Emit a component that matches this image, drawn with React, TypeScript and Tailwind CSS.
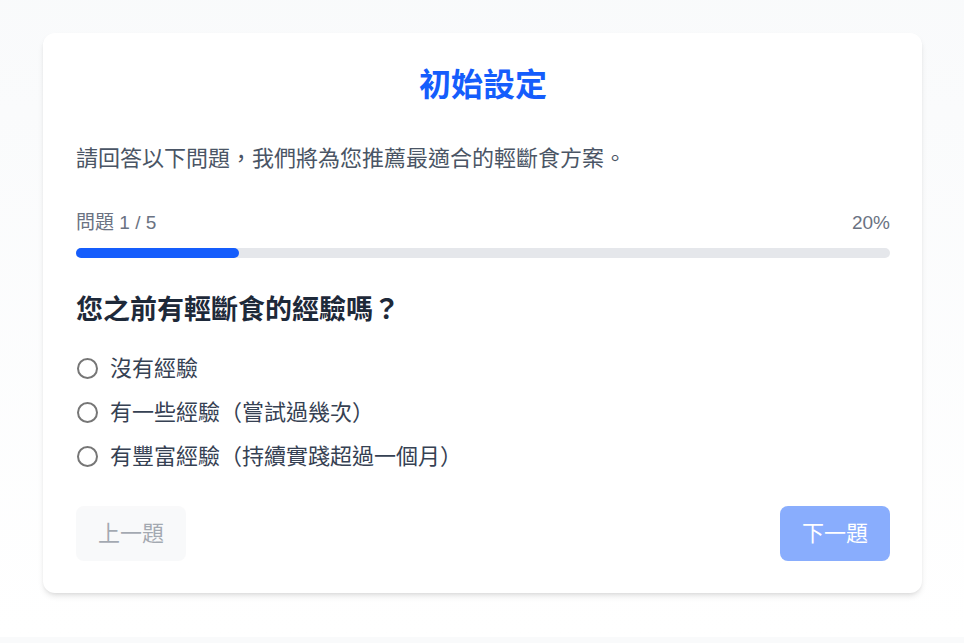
import { useState } from "react"

const OPTIONS = [
  "沒有經驗",
  "有一些經驗（嘗試過幾次）",
  "有豐富經驗（持續實踐超過一個月）",
]

const FONT = { fontFamily: '"Liberation Sans", "Noto Sans CJK TC", sans-serif' }

export default function App() {
  const [answer, setAnswer] = useState<number | null>(null)
  const step = 1
  const total = 5
  const pct = Math.round((step / total) * 100)

  return (
    <div className="min-h-screen bg-gray-50" style={FONT}>
      <div className="bg-gradient-to-b from-gray-50 to-white pl-[43px] pr-[42px] pt-[33px] pb-[44px]">
        <div className="rounded-xl bg-white py-8 pl-[33px] pr-8 shadow-md">
          <h1 className="text-center text-[32px] font-bold leading-10 text-blue-600">初始設定</h1>

          <p className="mt-[37px] text-[22px] leading-[33px] text-gray-600">
            請回答以下問題，我們將為您推薦最適合的輕斷食方案。
          </p>

          <div className="mt-[34px]">
            <div className="flex items-center justify-between text-[19px] leading-[27px] text-gray-500">
              <span>問題 {step} / {total}</span>
              <span>{pct}%</span>
            </div>
            <div className="mt-3 h-2.5 w-full rounded-full bg-gray-200">
              <div className="h-2.5 rounded-full bg-blue-600" style={{ width: `${pct}%` }} />
            </div>
          </div>

          <h2 className="mt-8 text-[27px] font-bold leading-10 text-gray-800">您之前有輕斷食的經驗嗎？</h2>

          <div className="mt-[22px] flex flex-col gap-[11px]">
            {OPTIONS.map((o, i) => (
              <label key={o} className="flex cursor-pointer items-center gap-3 text-[22px] leading-[33px] text-gray-700">
                <span
                  onClick={() => setAnswer(i)}
                  className="ml-px flex h-[21px] w-[21px] shrink-0 items-center justify-center rounded-full border-2 border-[#767676] bg-white"
                >
                  {answer === i && <span className="h-2.5 w-2.5 rounded-full bg-blue-600" />}
                </span>
                <span onClick={() => setAnswer(i)}>{o}</span>
              </label>
            ))}
          </div>

          <div className="mt-[33px] flex items-center justify-between">
            <button
              type="button"
              disabled
              className="h-[55px] w-[110px] rounded-lg bg-gray-100 text-[22px] font-normal text-gray-600 opacity-50"
            >
              上一題
            </button>
            <button
              type="button"
              disabled={answer === null}
              className="h-[55px] w-[110px] rounded-lg bg-blue-600 text-[22px] font-normal text-white disabled:opacity-50"
            >
              下一題
            </button>
          </div>
        </div>
      </div>
    </div>
  )
}
